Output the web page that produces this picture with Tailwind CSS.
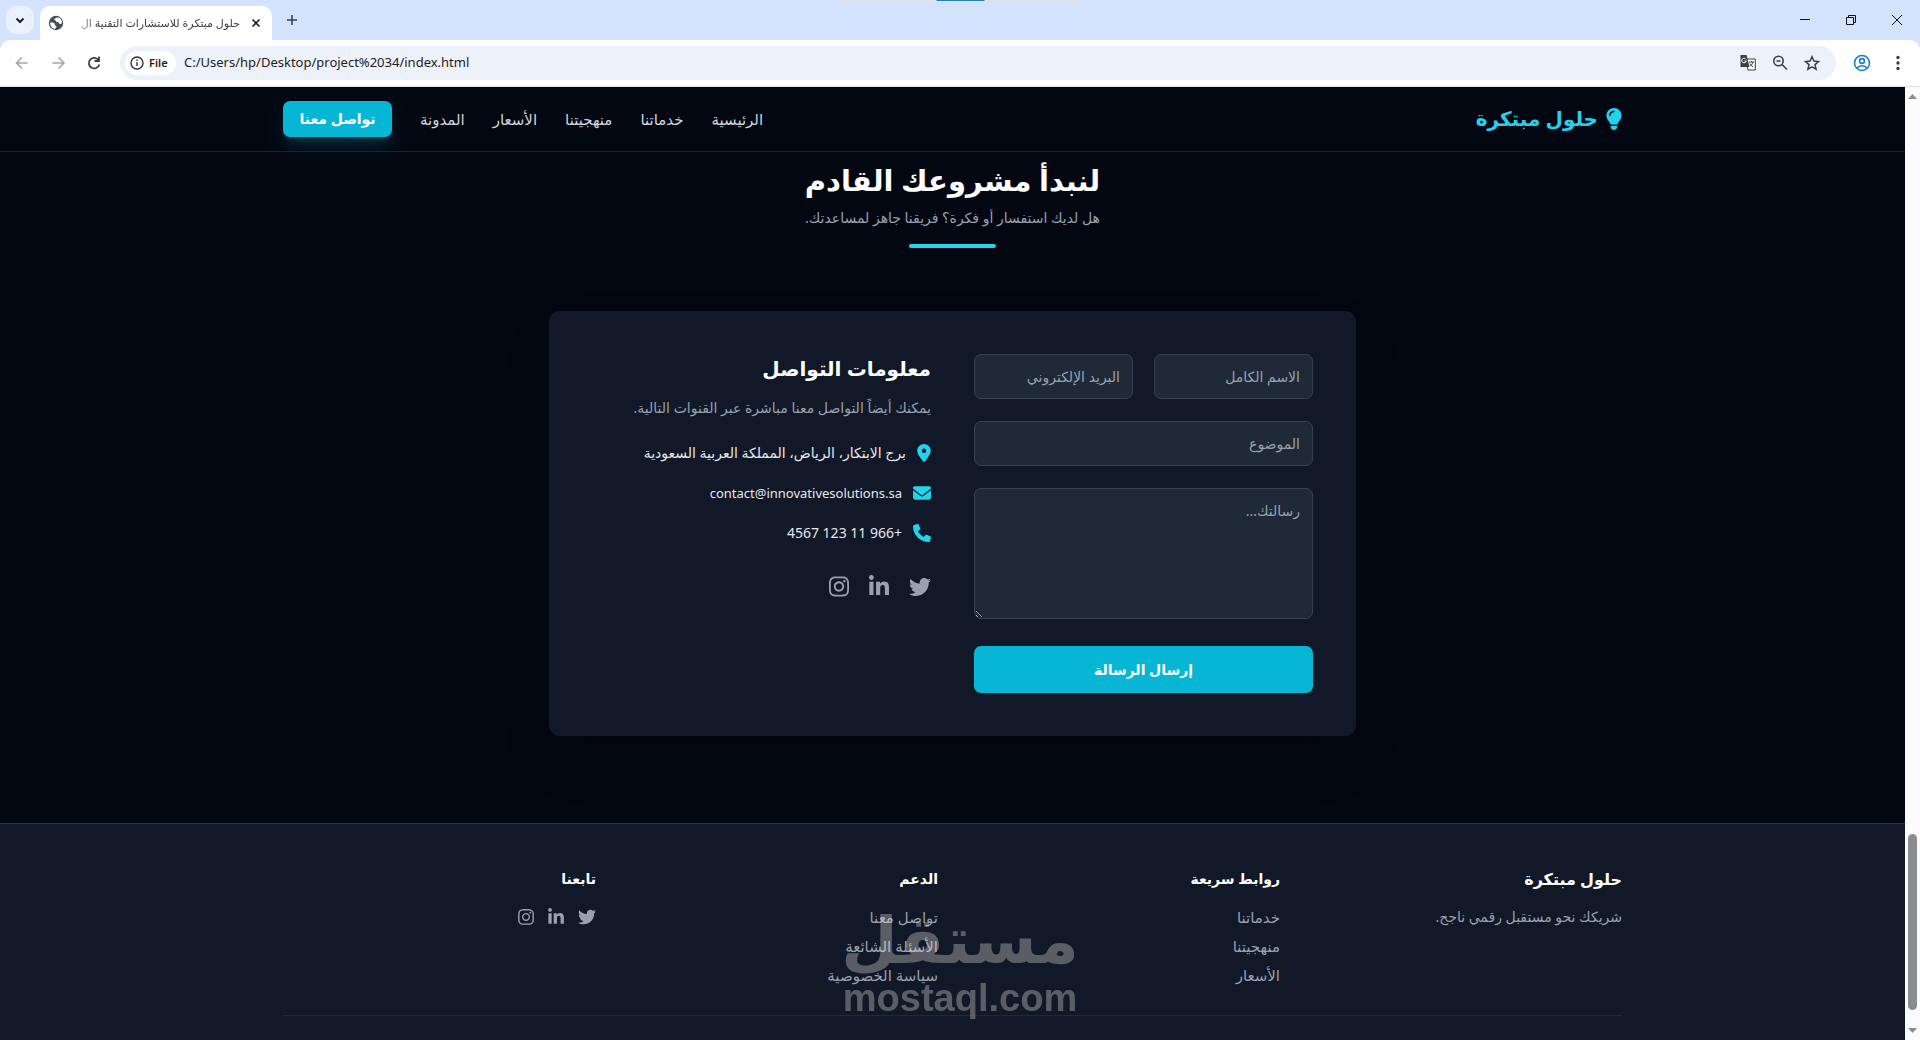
<!DOCTYPE html>
<html lang="ar">
<head>
<meta charset="utf-8">
<meta name="viewport" content="width=device-width, initial-scale=1">
<title>حلول مبتكرة للاستشارات التقنية</title>
<script src="https://cdn.jsdelivr.net/npm/@tailwindcss/browser@4"></script>
</head>
<body class="flex h-screen flex-col overflow-hidden bg-[#d3e3fd] font-['Noto_Sans','DejaVu_Sans',sans-serif]">

<svg class="hidden" aria-hidden="true">
  <symbol id="twitter" viewBox="0 0 512 512"><path d="M459.37 151.716c.325 4.548.325 9.097.325 13.645 0 138.72-105.583 298.558-298.558 298.558-59.452 0-114.68-17.219-161.137-47.106 8.447.974 16.568 1.299 25.34 1.299 49.055 0 94.213-16.568 130.274-44.832-46.132-.975-84.792-31.188-98.112-72.772 6.498.974 12.995 1.624 19.818 1.624 9.421 0 18.843-1.3 27.614-3.573-48.081-9.747-84.143-51.98-84.143-102.985v-1.299c13.969 7.797 30.214 12.67 47.431 13.319-28.264-18.843-46.781-51.005-46.781-87.391 0-19.492 5.197-37.36 14.294-52.954 51.655 63.675 129.3 105.258 216.365 109.807-1.624-7.797-2.599-15.918-2.599-24.04 0-57.828 46.782-104.934 104.934-104.934 30.213 0 57.502 12.67 76.67 33.137 23.715-4.548 46.456-13.32 66.599-25.34-7.798 24.366-24.366 44.833-46.132 57.827 21.117-2.273 41.584-8.122 60.426-16.243-14.292 20.791-32.161 39.308-52.628 54.253z"/></symbol>
  <symbol id="linkedin" viewBox="0 0 448 512"><path d="M100.28 448H7.4V148.9h92.88zM53.79 108.1C24.09 108.1 0 83.5 0 53.8a53.79 53.79 0 0 1 107.58 0c0 29.7-24.1 54.3-53.79 54.3zM447.9 448h-92.68V302.4c0-34.7-.7-79.2-48.29-79.2-48.29 0-55.69 37.7-55.69 76.7V448h-92.78V148.9h89.08v40.8h1.3c12.4-23.5 42.69-48.3 87.88-48.3 94 0 111.28 61.9 111.28 142.3V448z"/></symbol>
  <symbol id="instagram" viewBox="0 0 448 512"><path d="M224.1 141c-63.6 0-114.9 51.3-114.9 114.9s51.3 114.9 114.9 114.9S339 319.5 339 255.9 287.7 141 224.1 141zm0 189.6c-41.1 0-74.7-33.5-74.7-74.7s33.5-74.7 74.7-74.7 74.7 33.5 74.7 74.7-33.6 74.7-74.7 74.7zm146.4-194.3c0 14.9-12 26.8-26.8 26.8-14.9 0-26.8-12-26.8-26.8s12-26.8 26.8-26.8 26.8 12 26.8 26.8zm76.1 27.2c-1.7-35.9-9.9-67.7-36.2-93.9-26.2-26.2-58-34.4-93.9-36.2-37-2.1-147.9-2.1-184.9 0-35.8 1.7-67.6 9.9-93.9 36.1s-34.4 58-36.2 93.9c-2.1 37-2.1 147.9 0 184.9 1.7 35.9 9.9 67.7 36.2 93.9s58 34.4 93.9 36.2c37 2.1 147.9 2.1 184.9 0 35.9-1.7 67.7-9.9 93.9-36.2 26.2-26.2 34.4-58 36.2-93.9 2.1-37 2.1-147.8 0-184.8zM398.8 388c-7.8 19.6-22.9 34.7-42.6 42.6-29.5 11.7-99.5 9-132.1 9s-102.7 2.6-132.1-9c-19.6-7.8-34.7-22.9-42.6-42.6-11.7-29.5-9-99.5-9-132.1s-2.6-102.7 9-132.1c7.8-19.6 22.9-34.7 42.6-42.6 29.5-11.7 99.5-9 132.1-9s102.7-2.6 132.1 9c19.6 7.8 34.7 22.9 42.6 42.6 11.7 29.5 9 99.5 9 132.1s2.7 102.7-9 132.1z"/></symbol>
</svg>

<!-- Browser window frame -->
<div class="relative flex h-10 shrink-0 items-end pl-[6px]">
  <div class="absolute top-0 left-1/2 flex h-px w-[241px] -translate-x-1/2 justify-center bg-[#dfe1e5]"><span class="h-px w-12 bg-[#2b7fb8]"></span></div>
  <button aria-label="Search tabs" class="mb-[6px] flex size-7 items-center justify-center rounded-[10px] bg-[#ebf1fc]">
    <svg class="size-3" viewBox="0 0 12 12" fill="none" stroke="#1f2023" stroke-width="2"><path d="M2.5 4.5 6 8l3.5-3.5"/></svg>
  </button>
  <div class="ml-[6px] flex h-[34px] w-[232px] items-center rounded-t-[10px] bg-white pr-2 pl-[8px]">
    <svg class="size-4 shrink-0" viewBox="0 0 16 16"><circle cx="8" cy="8" r="7.2" fill="#4a4e53"/><path fill="#fff" d="M2.2 7.5c1.4 0 3.3-.2 4.2.8.8.9-.1 1.7.7 2.2.8.4 1.5.5 1.4 1.5L7 14C4 13.5 2 10.8 2.200 7.5zM7 3.5c1.2-.7 2.6-1.3 4-.9 1.8 1 3 2.9 3 5.3-.8 1.2-1.7 1.4-2.6.8-.7-.6-.7-1.5-1.7-1.6C8.4 7 7.7 6.5 8 5.500c-.9.1-1.5-.5-1.7-1.1z"/></svg>
    <span dir="rtl" class="ml-2 w-[168px] text-right text-[11px] leading-5 whitespace-nowrap text-[#3c4043] [mask-image:linear-gradient(to_right,transparent,black_24px)]">حلول مبتكرة للاستشارات التقنية ال</span>
    <button aria-label="Close tab" class="ml-auto flex size-4 items-center justify-center"><svg class="size-[10px]" viewBox="0 0 10 10" stroke="#1f2023" stroke-width="1.6"><path d="M1.500 1.500l7 7M8.500 1.500l-7 7"/></svg></button>
  </div>
  <button aria-label="New tab" class="mb-[14px] ml-[14px]"><svg class="size-3" viewBox="0 0 12 12" stroke="#3c4043" stroke-width="1.6"><path d="M6 1v10M1 6h10"/></svg></button>
  <div class="ml-auto flex h-10 items-center gap-9 pr-[18px]">
    <button aria-label="Minimize"><svg class="size-[10px]" viewBox="0 0 10 10" stroke="#111"><path d="M0 4.500h10"/></svg></button>
    <button aria-label="Restore"><svg class="size-[10px]" viewBox="0 0 10 10" fill="none" stroke="#111"><path d="M.5 2.500h7v7h-7zM2.500 2.500v-2h7v7h-2"/></svg></button>
    <button aria-label="Close"><svg class="size-[10px]" viewBox="0 0 10 10" stroke="#111"><path d="M0 0l10 10M10 0L0 10"/></svg></button>
  </div>
</div>
<div class="flex h-[47px] shrink-0 items-center rounded-t-[10px] border-b border-[#dfe1e5] bg-white pr-[19px] pl-[14px]">
  <div class="flex items-center gap-5">
    <button aria-label="Back"><svg class="size-4" viewBox="0 0 16 16" fill="none" stroke="#a4a8ac" stroke-width="1.6"><path d="M13.500 8H3M8 2.500 2.500 8 8 13.500"/></svg></button>
    <button aria-label="Forward"><svg class="size-4" viewBox="0 0 16 16" fill="none" stroke="#a4a8ac" stroke-width="1.6"><path d="M2.500 8h11M8.500 2.500 14 8l-5.500 5.500"/></svg></button>
    <button aria-label="Reload"><svg class="size-4" viewBox="0 0 16 16" fill="none" stroke="#3c4043" stroke-width="1.8"><path d="M12.500 5A5.300 5.300 0 1 0 13.300 9.500"/><path d="M13 1.500V6H8.500"/></svg></button>
  </div>
  <div class="ml-[18px] flex h-[34px] min-w-0 flex-1 items-center rounded-full bg-[#edf1fa] pr-4 pl-[5px]">
    <span class="flex h-6 w-[51px] shrink-0 items-center gap-[5px] rounded-full bg-white pl-[5px] text-[11px] font-semibold text-[#1f2023]">
      <svg class="size-[14px]" viewBox="0 0 14 14" fill="none" stroke="#303236" stroke-width="1.4"><circle cx="7" cy="7" r="6"/><path d="M7 6v4M7 3.500V5"/></svg>File</span>
    <input aria-label="Address" value="C:/Users/hp/Desktop/project%2034/index.html" class="ml-2 min-w-0 flex-1 bg-transparent text-[13px] text-[#1f2023] outline-none">
    <div class="flex items-center gap-4">
      <button aria-label="Translate"><svg class="size-4" viewBox="0 0 16 16" fill="none"><path d="M6 4h9.300v11H8z" fill="#fff" stroke="#3c4043"/><path d="M.5 0h6l3 12H.5z" fill="#3c4043"/><path d="M6 4.300A2.300 2.300 0 1 0 6.300 6H4.500" stroke="#fff"/><path d="M9 7h5M11.500 6v1M13 7c-.5 2-2 3.500-3 4M10 8.500c.8 1.500 2 2.500 3.300 3.500" stroke="#3c4043"/></svg></button>
      <button aria-label="Zoom"><svg class="size-4" viewBox="0 0 16 16" fill="none" stroke="#3c4043" stroke-width="1.6"><circle cx="6.500" cy="6" r="4.700"/><path d="M10 9.500l5 5M4.500 6h4"/></svg></button>
      <button aria-label="Bookmark"><svg class="size-4" viewBox="0 0 16 16" fill="none" stroke="#3c4043" stroke-width="1.5"><path d="M8 1.800l1.900 4.300 4.600.4-3.500 3.100 1.100 4.600L8 11.800l-4.100 2.400L5 9.600 1.500 6.500l4.600-.4z"/></svg></button>
    </div>
  </div>
  <button aria-label="Profile" class="ml-[17px]"><svg class="size-[18px]" viewBox="0 0 18 18" fill="none" stroke="#1a7ec2" stroke-width="1.6"><circle cx="9" cy="9" r="7.500"/><circle cx="9" cy="7" r="2.400"/><path d="M4 14.200c1.200-1.700 3-2.500 5-2.500s3.800.8 5 2.500"/></svg></button>
  <button aria-label="Menu" class="ml-[25px] pr-px"><svg class="h-4 w-1" viewBox="0 0 4 16" fill="#3c4043"><circle cx="2" cy="2.500" r="1.700"/><circle cx="2" cy="8" r="1.700"/><circle cx="2" cy="13.500" r="1.700"/></svg></button>
</div>

<div class="relative flex min-h-0 flex-1">
  <!-- Page -->
  <div dir="rtl" class="flex min-w-0 flex-1 flex-col overflow-hidden bg-[#030712] text-[14px] leading-6 text-gray-200">
    <header class="shrink-0 border-b border-gray-800/80">
      <div class="mx-auto flex h-16 max-w-[1339px] items-center justify-between">
        <a href="#" class="flex items-center gap-2 text-[20px] font-bold text-[#22d3ee]">
          <svg class="h-[22px] w-4" viewBox="16 0 352 512" fill="currentColor"><path d="M272 384c9.600-31.900 29.500-59.100 49.200-86.200 5.200-7.100 10.400-14.200 15.400-21.400 19.800-28.500 31.400-63 31.400-100.300C368 78.800 289.200 0 192 0S16 78.800 16 176c0 37.300 11.600 71.900 31.400 100.300 5 7.200 10.200 14.300 15.400 21.400 19.800 27.100 39.700 54.400 49.200 86.200H272zM192 512c44.200 0 80-35.800 80-80V416H112v16c0 44.200 35.800 80 80 80zM112 176c0 8.800-7.200 16-16 16s-16-7.200-16-16c0-61.900 50.100-112 112-112 8.800 0 16 7.200 16 16s-7.200 16-16 16c-44.200 0-80 35.800-80 80z"/></svg>
          حلول مبتكرة
        </a>
        <nav class="flex items-center gap-7 whitespace-nowrap text-[15px] text-gray-300">
          <a href="#">الرئيسية</a>
          <a href="#">خدماتنا</a>
          <a href="#">منهجيتنا</a>
          <a href="#">الأسعار</a>
          <a href="#">المدونة</a>
          <a href="#contact" class="flex h-9 w-[109px] items-center justify-center rounded-[7px] bg-[#06b6d4] text-[14px] font-bold text-white shadow-lg shadow-cyan-500/20">تواصل معنا</a>
        </nav>
      </div>
    </header>

    <main id="contact" class="shrink-0">
      <div class="flex flex-col items-center text-center">
        <h2 class="mt-[7px] text-[29px] leading-[42px] font-bold text-white">لنبدأ مشروعك القادم</h2>
        <p class="mt-[5px] text-gray-400">هل لديك استفسار أو فكرة؟ فريقنا جاهز لمساعدتك.</p>
        <div class="mt-[14px] h-1 w-[87px] rounded-full bg-[#22d3ee]"></div>
      </div>
      <div class="mx-auto mt-[63px] grid max-w-[807px] grid-cols-[339px_1fr] gap-[43px] rounded-[11px] bg-[#111827] p-[43px] shadow-2xl">
        <form class="grid grid-cols-2 gap-x-[21px]">
          <input aria-label="الاسم الكامل" placeholder="الاسم الكامل" class="h-[45px] min-w-0 rounded-[7px] border border-gray-700 bg-[#1f2937] px-3 placeholder:text-gray-400">
          <input aria-label="البريد الإلكتروني" placeholder="البريد الإلكتروني" type="email" class="h-[45px] min-w-0 rounded-[7px] border border-gray-700 bg-[#1f2937] px-3 placeholder:text-gray-400">
          <input aria-label="الموضوع" placeholder="الموضوع" class="col-span-2 mt-[22px] h-[45px] rounded-[7px] border border-gray-700 bg-[#1f2937] px-3 placeholder:text-gray-400">
          <textarea aria-label="رسالتك" placeholder="رسالتك..." class="col-span-2 mt-[22px] h-[131px] rounded-[7px] border border-gray-700 bg-[#1f2937] px-3 py-[10px] placeholder:text-gray-400"></textarea>
          <button type="button" class="col-span-2 mt-[27px] h-[47px] rounded-[7px] bg-[#06b6d4] text-[14px] font-bold text-white">إرسال الرسالة</button>
        </form>
        <div>
          <h3 class="text-[20px] leading-[30px] font-bold text-white">معلومات التواصل</h3>
          <p class="mt-3 whitespace-nowrap text-gray-400">يمكنك أيضاً التواصل معنا مباشرة عبر القنوات التالية.</p>
          <ul class="mt-[21px] flex flex-col gap-4">
            <li class="flex items-center gap-[11px] whitespace-nowrap"><svg class="h-[18px] w-[14px] text-[#22d3ee]" viewBox="0 0 384 512" fill="currentColor"><path d="M215.700 499.200C267 435 384 279.400 384 192C384 86 298 0 192 0S0 86 0 192c0 87.400 117 243 168.300 307.200c12.300 15.300 35.100 15.300 47.400 0zM192 128a64 64 0 1 1 0 128 64 64 0 1 1 0-128z"/></svg>برج الابتكار، الرياض، المملكة العربية السعودية</li>
            <li class="flex items-center gap-[11px] text-[13px]"><svg class="size-[18px] text-[#22d3ee]" viewBox="0 0 512 512" fill="currentColor"><path d="M48 64C21.500 64 0 85.500 0 112c0 15.100 7.100 29.300 19.200 38.400L236.800 313.600c11.400 8.500 27 8.500 38.400 0L492.800 150.400c12.100-9.100 19.200-23.300 19.200-38.400c0-26.500-21.500-48-48-48H48zM0 176V384c0 35.300 28.700 64 64 64H448c35.300 0 64-28.700 64-64V176L294.400 339.200c-22.800 17.100-54 17.100-76.800 0L0 176z"/></svg>contact@innovativesolutions.sa</li>
            <li class="flex items-center gap-[11px]"><svg class="size-[18px] text-[#22d3ee]" viewBox="0 0 512 512" fill="currentColor"><path d="M164.900 24.600c-7.700-18.600-28-28.500-47.400-23.200l-88 24C12.100 30.200 0 46 0 64C0 311.400 200.600 512 448 512c18 0 33.800-12.100 38.600-29.500l24-88c5.300-19.400-4.600-39.700-23.200-47.400l-96-40c-16.300-6.800-35.200-2.100-46.300 11.600L304.700 368C234.300 334.700 177.300 277.700 144 207.300L193.300 167c13.700-11.200 18.400-30 11.600-46.300l-40-96z"/></svg><span>+966 11 123 4567</span></li>
          </ul>
          <div class="mt-[30px] flex items-center gap-5 text-gray-400">
            <a href="#" aria-label="Twitter"><svg class="size-[22px]" fill="currentColor"><use href="#twitter"/></svg></a>
            <a href="#" aria-label="LinkedIn"><svg class="h-[23px] w-5" fill="currentColor"><use href="#linkedin"/></svg></a>
            <a href="#" aria-label="Instagram"><svg class="h-[23px] w-5" fill="currentColor"><use href="#instagram"/></svg></a>
          </div>
        </div>
      </div>
    </main>

    <footer class="mt-[87px] flex-1 border-t border-gray-700/70 bg-[#111827]">
      <div class="mx-auto max-w-[1339px] pt-[42px]">
        <div class="grid grid-cols-4 gap-x-[29px] border-b border-gray-800 pb-7 text-gray-400">
          <div>
            <h4 class="text-[16px] leading-[26px] font-bold text-white">حلول مبتكرة</h4>
            <p class="mt-[13px]">شريكك نحو مستقبل رقمي ناجح.</p>
          </div>
          <div>
            <h4 class="text-[14px] leading-[26px] font-bold text-white">روابط سريعة</h4>
            <ul class="mt-[13px] flex flex-col gap-[5px] text-[15px] leading-6"><li><a href="#">خدماتنا</a></li><li><a href="#">منهجيتنا</a></li><li><a href="#">الأسعار</a></li></ul>
          </div>
          <div>
            <h4 class="text-[14px] leading-[26px] font-bold text-white">الدعم</h4>
            <ul class="mt-[13px] flex flex-col gap-[5px] text-[15px] leading-6"><li><a href="#">تواصل معنا</a></li><li><a href="#">الأسئلة الشائعة</a></li><li><a href="#">سياسة الخصوصية</a></li></ul>
          </div>
          <div>
            <h4 class="text-[14px] leading-[26px] font-bold text-white">تابعنا</h4>
            <div class="mt-4 flex items-center gap-[14px]">
              <a href="#" aria-label="Twitter"><svg class="size-[18px]" fill="currentColor"><use href="#twitter"/></svg></a>
              <a href="#" aria-label="LinkedIn"><svg class="h-[18px] w-4" fill="currentColor"><use href="#linkedin"/></svg></a>
              <a href="#" aria-label="Instagram"><svg class="h-[18px] w-4" fill="currentColor"><use href="#instagram"/></svg></a>
            </div>
          </div>
        </div>
      </div>
    </footer>
  </div>

  <!-- Scrollbar -->
  <div class="flex w-[15px] shrink-0 flex-col items-center justify-between bg-[#fcfcfc] py-[7px]">
    <svg class="h-[5px] w-[9px]" viewBox="0 0 9 5" fill="#8b8d8f"><path d="M0 5 4.500 0 9 5z"/></svg>
    <div class="flex flex-1 flex-col justify-end pb-[18px]"><div class="h-44 w-[9px] rounded-full bg-[#8a8d90]"></div></div>
    <svg class="h-[5px] w-[9px]" viewBox="0 0 9 5" fill="#8b8d8f"><path d="M0 0h9L4.500 5z"/></svg>
  </div>

  <!-- Watermark -->
  <div class="pointer-events-none absolute bottom-[20px] left-1/2 flex -translate-x-1/2 flex-col items-center font-bold text-[#f5efe6] opacity-32">
    <span class="text-[65px] leading-[76px]">مستقل</span>
    <span class="font-['Liberation_Sans',sans-serif] text-[38px] leading-[44px]">mostaql.com</span>
  </div>
</div>
</body>
</html>
